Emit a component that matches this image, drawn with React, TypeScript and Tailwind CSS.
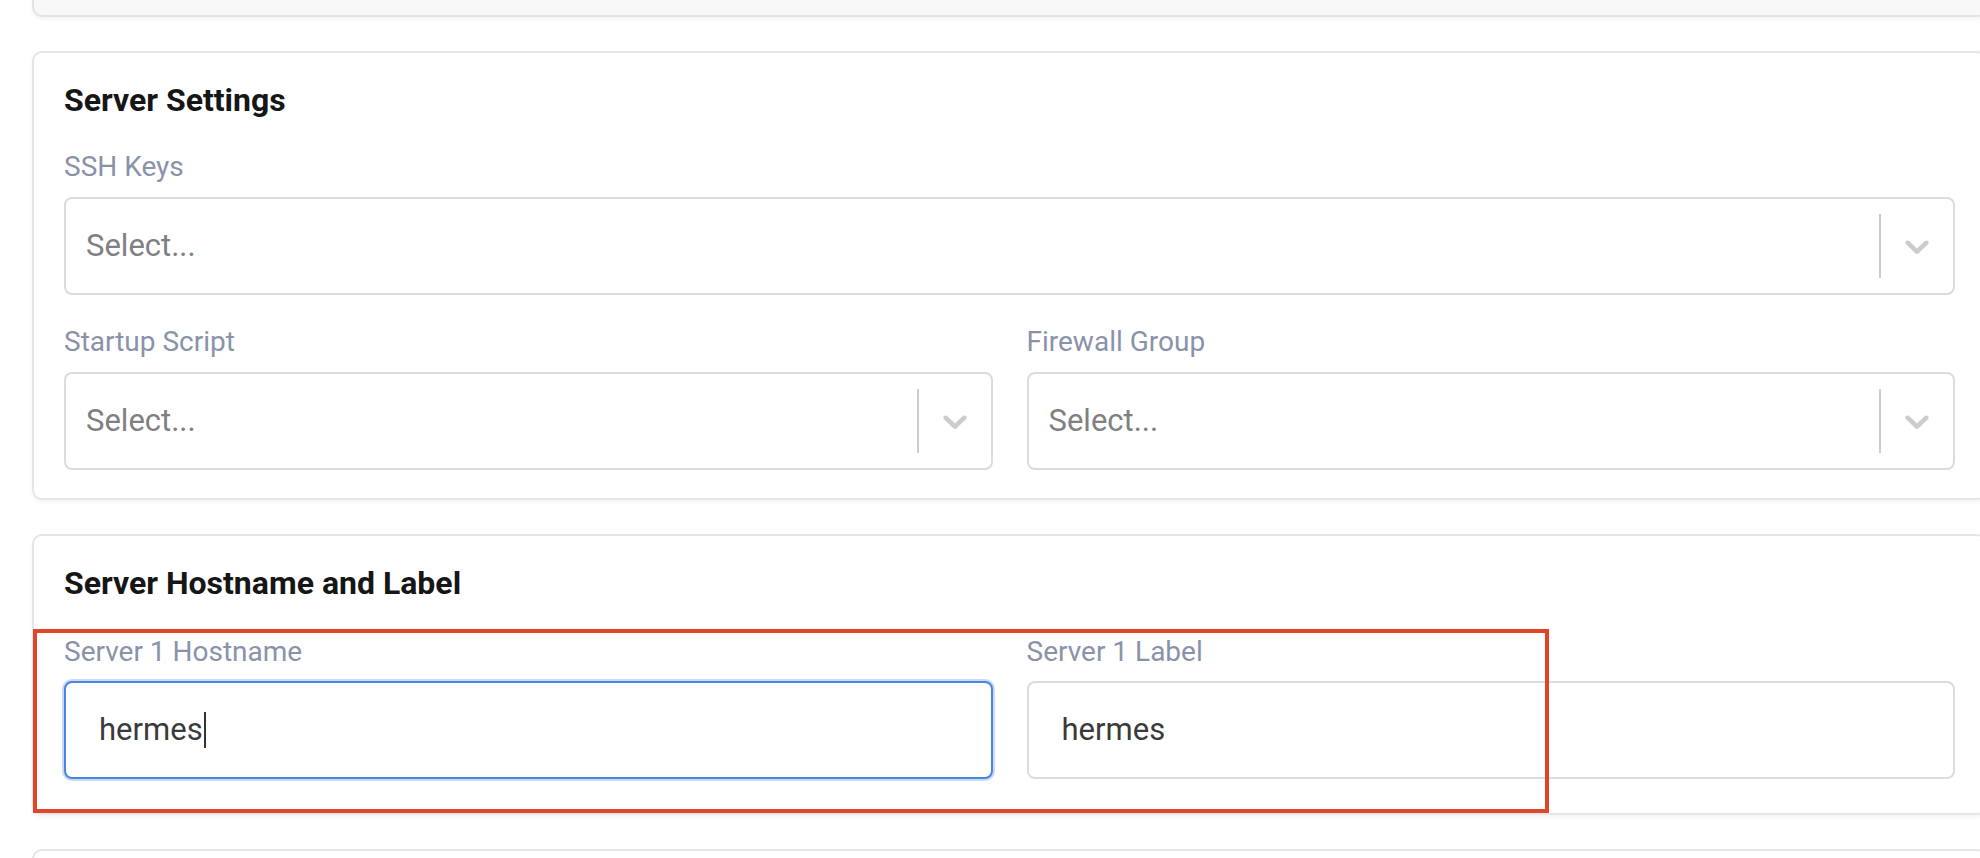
import React from "react";

const FONT = { fontFamily: "Roboto, 'Liberation Sans', Arial, sans-serif" };

function Chevron() {
  return (
    <svg viewBox="0 0 20 20" width="40" height="40" className="fill-[#cccccc]">
      <path d="M4.516 7.548c0.436-0.446 1.043-0.481 1.576 0l3.908 3.747 3.908-3.747c0.533-0.481 1.141-0.446 1.574 0 0.436 0.445 0.408 1.197 0 1.615-0.406 0.418-4.695 4.502-4.695 4.502-0.217 0.223-0.502 0.335-0.787 0.335s-0.57-0.112-0.789-0.335c0 0-4.287-4.084-4.695-4.502s-0.436-1.17 0-1.615z" />
    </svg>
  );
}

function FieldLabel({ children }: { children: React.ReactNode }) {
  return <div className="h-[34px] text-[28px] leading-[34px] text-[#8a92aa]">{children}</div>;
}

function SelectBox() {
  return (
    <div className="flex h-[98px] items-center rounded-[8px] border-2 border-[#dcdcdc] bg-white">
      <div className="flex-1 pl-[20px] text-[31px] text-[#808080]">Select...</div>
      <div className="h-[64px] w-[2px] bg-[#cccccc]" />
      <div className="flex w-[72px] items-center justify-center">
        <Chevron />
      </div>
    </div>
  );
}

function SelectField({ label, className = "" }: { label: string; className?: string }) {
  return (
    <div className={`flex flex-col gap-[13px] ${className}`}>
      <FieldLabel>{label}</FieldLabel>
      <SelectBox />
    </div>
  );
}

function TextField({ label, value, focused }: { label: string; value: string; focused?: boolean }) {
  return (
    <div className="flex flex-col gap-[12px]">
      <FieldLabel>{label}</FieldLabel>
      <div
        className={`flex h-[98px] items-center rounded-[8px] border-2 bg-white pl-[33px] text-[31px] text-[#3a3a3a] ${
          focused ? "border-[#4a86e0] shadow-[0_0_0_2px_rgba(74,134,224,0.3)]" : "border-[#dcdcdc]"
        }`}
      >
        <span>{value}</span>
        {focused && <span className="ml-[1px] h-[36px] w-[2px] bg-[#333333]" />}
      </div>
    </div>
  );
}

function Card({ title, children }: { title: string; children: React.ReactNode }) {
  return (
    <div className="w-[1955px] shrink-0 rounded-[10px] border-2 border-[#e6e6e6] bg-white px-[30px] pt-[27px] shadow-[0_2px_4px_rgba(0,0,0,0.05)]">
      <h2 className="h-[40px] text-[32px] font-bold leading-[40px] text-[#161616]">{title}</h2>
      {children}
    </div>
  );
}

export default function App() {
  return (
    <div className="h-[858px] w-[1980px] overflow-hidden bg-white" style={FONT}>
      <div className="flex flex-col gap-[34px] pl-[32px]">
        <div className="h-[17px] w-[1955px] rounded-b-[10px] border-2 border-t-0 border-[#e3e3e3] bg-[#f8f8f8] shadow-[0_2px_4px_rgba(0,0,0,0.05)]" />

        <Card title="Server Settings">
          <div className="flex flex-col pb-[28px]">
            <SelectField label="SSH Keys" className="mt-[30px]" />
            <div className="mt-[30px] grid grid-cols-2 gap-[34px]">
              <SelectField label="Startup Script" />
              <SelectField label="Firewall Group" />
            </div>
          </div>
        </Card>

        <div className="relative">
          <Card title="Server Hostname and Label">
            <div className="mt-[32px] grid grid-cols-2 gap-[34px] pb-[34px]">
              <TextField label="Server 1 Hostname" value="hermes" focused />
              <TextField label="Server 1 Label" value="hermes" />
            </div>
          </Card>
          <div className="pointer-events-none absolute left-[1px] top-[95px] h-[184px] w-[1516px] border-4 border-[#e0442b]" />
        </div>

        <div className="h-[80px] w-[1955px] shrink-0 rounded-t-[10px] border-2 border-[#e6e6e6] bg-white" />
      </div>
    </div>
  );
}
